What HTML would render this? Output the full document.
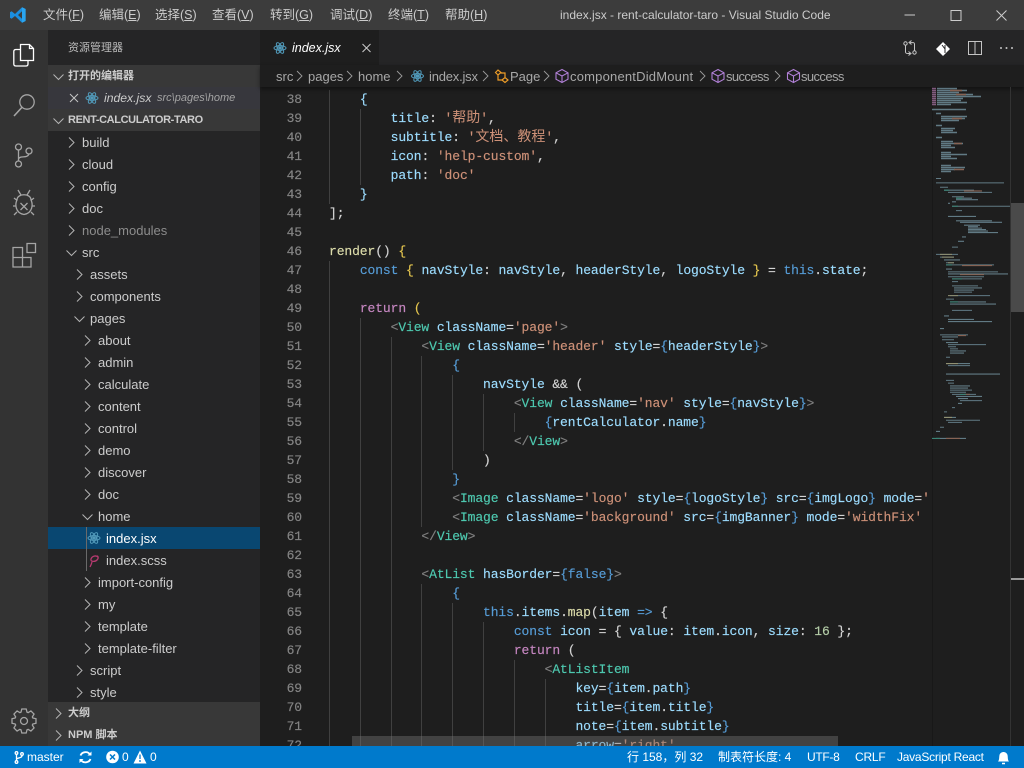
<!DOCTYPE html>
<html><head><meta charset="utf-8"><title>index.jsx - rent-calculator-taro - Visual Studio Code</title>
<style>
*{margin:0;padding:0;box-sizing:border-box}
html,body{width:1024px;height:768px;overflow:hidden;background:#1e1e1e}
body{position:relative;font-family:"Liberation Sans","Noto Sans CJK SC",sans-serif;font-size:13px;color:#ccc}
.a{position:absolute}
.t{position:absolute;white-space:nowrap}
.m{position:absolute;top:7px;font-size:12.5px;line-height:17px;color:#ccc;white-space:nowrap}
.m u{text-decoration:underline}
.r{position:absolute;height:22px;line-height:23px;white-space:nowrap;font-size:13px;color:#ccc}
.c{position:absolute;left:0;top:0;overflow:visible}
.h{position:absolute;font-weight:bold;font-size:11px;line-height:22px;color:#ccc;white-space:nowrap}
pre{font-family:"Liberation Mono","Noto Sans CJK SC",monospace;font-size:13px;letter-spacing:-.1px;line-height:19px;position:absolute;-webkit-text-stroke:.15px}
pre b{font-weight:normal;font-size:14px;letter-spacing:0;font-family:"Noto Sans CJK SC",sans-serif;line-height:1;-webkit-text-stroke:0}
.g{position:absolute;width:1px;background:#404040}
.v{color:#9cdcfe}.s{color:#ce9178}.k{color:#c586c0}.q{color:#569cd6}.f{color:#dcdcaa}.n{color:#4ec9b0}.p{color:#808080}.d{color:#e6c74f}.l{color:#569cd6}.w{color:#d4d4d4}
.bc{position:absolute;top:65px;height:22px;line-height:23px;font-size:13px;color:#a8a8a8;white-space:nowrap}
.st{position:absolute;top:746px;height:22px;line-height:23px;font-size:12px;color:#fff;white-space:nowrap}
</style></head><body>
<!-- title bar -->
<div class="a" style="left:0;top:0;width:1024px;height:30px;background:#3c3c3c"></div>
<svg class="a" style="left:9px;top:6px" width="18" height="18" viewBox="0 0 18 18"><path d="M13 1.2L16.6 3V15L13 16.8L6 10L2.6 12.7L1 11.8V6.2L2.6 5.3L6 8ZM13 5.2L9 9L13 12.8Z" fill="#1b8fe0"/><path d="M13 1.2L16.6 3V15L13 16.8Z" fill="#2aa5f0"/></svg>
<div class="m" style="left:43px">文件(<u>F</u>)</div>
<div class="m" style="left:99px">编辑(<u>E</u>)</div>
<div class="m" style="left:155px">选择(<u>S</u>)</div>
<div class="m" style="left:212px">查看(<u>V</u>)</div>
<div class="m" style="left:270px">转到(<u>G</u>)</div>
<div class="m" style="left:330px">调试(<u>D</u>)</div>
<div class="m" style="left:388px">终端(<u>T</u>)</div>
<div class="m" style="left:445px">帮助(<u>H</u>)</div>
<div class="t" style="left:560px;top:7px;font-size:12px;line-height:17px;color:#ccc">index.jsx - rent-calculator-taro - Visual Studio Code</div>
<svg class="a" style="left:900px;top:0" width="124" height="30" fill="none" stroke="#ccc"><path d="M4.5 15H15" /><path d="M51 10.5H61V20.5H51Z"/><path d="M96.5 10.5L106.500 20.5M106.500 10.5L96.5 20.5"/></svg>
<!-- activity bar -->
<div class="a" style="left:0;top:30px;width:48px;height:716px;background:#333"></div>
<svg class="a" style="left:0;top:30px" width="48" height="716" fill="none" stroke-width="1.3">
<path stroke="#fff" d="M20.5 14.5H29.5L33.5 18.5V30.5H20.5ZM29.5 14.5V18.5H33.5M20.5 19.5H16C14.6 19.5 13.8 20.3 13.8 21.5V34C13.8 35.5 14.6 36 16 36H26C27.3 36 28 35.3 28 34V30.5"/>
<g stroke="#a5a5a5"><circle cx="27" cy="72" r="7.2"/><path d="M21.8 77.5L14 86" stroke-width="1.6"/>
<circle cx="18.500" cy="117" r="3"/><circle cx="18.500" cy="134" r="3"/><circle cx="29" cy="121" r="3"/><path d="M18.500 120V131M18.500 129C20 125 27 129 29 124"/>
<g transform="translate(1 5)"><path d="M16 165C16 158 30 158 30 165C32 169 32 178 23 179.500C14 178 14 169 16 165ZM20 160L17 155M26 160L29 155M19.500 168L26.500 175M26.500 168L19.500 175M15.500 171H12M30.500 171H34M16 177L13 180M30 177L33 180M15.500 165L13 163M30.500 165L33 163"/></g>
<path d="M13 217.500H22.500V227.500H31V237H13ZM13 227.500H22.500V237"/><path d="M27 213.500H35.500V222.500H27Z"/>
<polygon transform="translate(24 691)" points="-3,-8.800 -2.200,-12 2.200,-12 3,-8.800 4.100,-8.340 6.920,-10.040 10.040,-6.920 8.340,-4.100 8.800,-3 12,-2.200 12,2.200 8.800,3 8.340,4.100 10.040,6.920 6.920,10.040 4.100,8.340 3,8.800 2.200,12 -2.200,12 -3,8.800 -4.100,8.340 -6.920,10.040 -10.040,6.920 -8.340,4.100 -8.800,3 -12,2.200 -12,-2.200 -8.800,-3 -8.340,-4.100 -10.040,-6.920 -6.920,-10.040 -4.100,-8.340"/><circle cx="24" cy="691" r="3.500"/></g>
</svg>
<!-- sidebar -->
<div class="a" style="left:48px;top:30px;width:212px;height:716px;background:#252526"></div>
<div class="t" style="left:68px;top:40px;font-size:11px;line-height:16px;color:#bbb">资源管理器</div>
<div class="a" style="left:48px;top:65px;width:212px;height:22px;background:#383838"></div>
<div class="a" style="left:48px;top:87px;width:212px;height:22px;background:#37373d"></div>
<div class="a" style="left:48px;top:109px;width:212px;height:22px;background:#383838"></div>
<div class="a" style="left:48px;top:527px;width:212px;height:22px;background:#094771"></div>
<div class="a" style="left:48px;top:702px;width:212px;height:44px;background:#383838"></div>
<div class="a" style="left:86px;top:527px;width:1px;height:44px;background:#6a6a6a"></div>
<div class="h" style="left:68px;top:65px">打开的编辑器</div>
<div class="h" style="left:68px;top:109px;letter-spacing:-.38px">RENT-CALCULATOR-TARO</div>
<div class="h" style="left:68px;top:702px">大纲</div>
<div class="h" style="left:68px;top:724px">NPM 脚本</div>
<svg class="c" width="260" height="746" fill="none" stroke="#b4b4b4" stroke-width="1">
<defs><g id="cr"><path d="M0 -.5L5 4.500L0 9.500"/></g><g id="cd"><path d="M-.5 1.500L4.500 6.500L9.500 1.500"/></g>
<g id="re" stroke="#519aba" stroke-width="1"><circle cx="8" cy="8" r="1.300" fill="#519aba"/><ellipse cx="8" cy="8" rx="6" ry="2.400"/><ellipse cx="8" cy="8" rx="6" ry="2.400" transform="rotate(60 8 8)"/><ellipse cx="8" cy="8" rx="6" ry="2.400" transform="rotate(120 8 8)"/></g>
<g id="cu" stroke="#b180d7" stroke-width="1.100"><path d="M8 1.500L14 4.800V11.200L8 14.500L2 11.200V4.800ZM2 4.800L8 8L14 4.800M8 8V14.500"/></g></defs>
<use href="#cd" x="54" y="73"/><path d="M70 94L78 102M78 94L70 102" stroke="#c5c5c5"/><use href="#re" x="84" y="90"/>
<use href="#cd" x="54" y="117"/>
<use href="#cr" x="69" y="138"/><use href="#cr" x="69" y="160"/><use href="#cr" x="69" y="182"/><use href="#cr" x="69" y="204"/><use href="#cr" x="69" y="226"/>
<use href="#cd" x="67" y="249"/>
<use href="#cr" x="77" y="270"/><use href="#cr" x="77" y="292"/><use href="#cd" x="75" y="315"/>
<use href="#cr" x="85" y="336"/><use href="#cr" x="85" y="358"/><use href="#cr" x="85" y="380"/><use href="#cr" x="85" y="402"/><use href="#cr" x="85" y="424"/><use href="#cr" x="85" y="446"/><use href="#cr" x="85" y="468"/><use href="#cr" x="85" y="490"/>
<use href="#cd" x="83" y="513"/>
<use href="#re" x="86" y="530"/>
<path d="M98 557C96 555 92 556 91 559C90 562 95 562 97 560C99 558 98 556 97 556M92 562C91.500 564 91 565 90 567" stroke="#b73a70" stroke-width="1.300"/>
<use href="#cr" x="85" y="578"/><use href="#cr" x="85" y="600"/><use href="#cr" x="85" y="622"/><use href="#cr" x="85" y="644"/>
<use href="#cr" x="77" y="666"/><use href="#cr" x="77" y="688"/>
<use href="#cr" x="56" y="709"/><use href="#cr" x="56" y="731"/>
</svg>
<div class="r" style="left:104px;top:87px;font-style:italic;font-size:12.200px">index.jsx</div>
<div class="r" style="left:157px;top:87px;font-style:italic;font-size:11px;color:#a4a4a4">src\pages\home</div>
<div class="r" style="left:82px;top:131px">build</div>
<div class="r" style="left:82px;top:153px">cloud</div>
<div class="r" style="left:82px;top:175px">config</div>
<div class="r" style="left:82px;top:197px">doc</div>
<div class="r" style="left:82px;top:219px;color:#8c8c8c">node_modules</div>
<div class="r" style="left:82px;top:241px">src</div>
<div class="r" style="left:90px;top:263px">assets</div>
<div class="r" style="left:90px;top:285px">components</div>
<div class="r" style="left:90px;top:307px">pages</div>
<div class="r" style="left:98px;top:329px">about</div>
<div class="r" style="left:98px;top:351px">admin</div>
<div class="r" style="left:98px;top:373px">calculate</div>
<div class="r" style="left:98px;top:395px">content</div>
<div class="r" style="left:98px;top:417px">control</div>
<div class="r" style="left:98px;top:439px">demo</div>
<div class="r" style="left:98px;top:461px">discover</div>
<div class="r" style="left:98px;top:483px">doc</div>
<div class="r" style="left:98px;top:505px">home</div>
<div class="r" style="left:106px;top:527px;color:#fff">index.jsx</div>
<div class="r" style="left:106px;top:549px">index.scss</div>
<div class="r" style="left:98px;top:571px">import-config</div>
<div class="r" style="left:98px;top:593px">my</div>
<div class="r" style="left:98px;top:615px">template</div>
<div class="r" style="left:98px;top:637px">template-filter</div>
<div class="r" style="left:90px;top:659px">script</div>
<div class="r" style="left:90px;top:681px">style</div>
<!-- tabs -->
<div class="a" style="left:260px;top:30px;width:764px;height:35px;background:#252526"></div>
<div class="a" style="left:260px;top:30px;width:119px;height:35px;background:#1e1e1e"></div>
<svg class="a" style="left:260px;top:30px" width="764" height="35" fill="none">
<use href="#re" x="12" y="10"/><path d="M102.500 14L110.500 22M110.500 14L102.500 22" stroke="#ccc"/>
<g stroke="#c5c5c5" stroke-width="1"><circle cx="645.500" cy="13.500" r="1.700"/><circle cx="654.500" cy="22.500" r="1.700"/><path d="M645.500 15.500V22C645.500 23.500 646.500 23.500 650 23.500M648.500 21.500L651 23.500L648.500 25.500M654.500 20.500V14C654.500 12.500 653.500 12.500 650 12.500M651.500 10.500L649 12.500L651.500 14.500"/>
<rect x="708.500" y="11.500" width="13" height="13"/><path d="M715 11.500V24.500"/></g>
<path d="M683 12L690 19L683 26L676 19Z" fill="#fff"/><path d="M682 15L685 19V23M685 19V15" stroke="#252526"/>
<g fill="#c5c5c5"><circle cx="741" cy="18" r="1"/><circle cx="746.500" cy="18" r="1"/><circle cx="752" cy="18" r="1"/></g></svg>
<div class="t" style="left:292px;top:38px;line-height:20px;font-style:italic;color:#fff;font-size:12.500px">index.jsx</div>
<!-- breadcrumbs -->
<div class="bc" style="left:276px">src</div>
<div class="bc" style="left:308px">pages</div>
<div class="bc" style="left:358px">home</div>
<div class="bc" style="left:429px;letter-spacing:-.2px">index.jsx</div>
<div class="bc" style="left:510px">Page</div>
<div class="bc" style="left:570px;letter-spacing:.2px">componentDidMount</div>
<div class="bc" style="left:726px;letter-spacing:-.6px">success</div>
<div class="bc" style="left:801px;letter-spacing:-.6px">success</div>
<!-- editor code -->
<div class="a" id="ed" style="left:0;top:87px;width:1024px;height:659px;overflow:hidden">
<div class="g" style="left:329px;top:3px;height:114px"></div><div class="g" style="left:360px;top:22px;height:76px"></div>
<div class="g" style="left:329px;top:174px;height:485px"></div><div class="g" style="left:360px;top:231px;height:428px"></div>
<div class="g" style="left:391px;top:250px;height:409px"></div><div class="g" style="left:421px;top:269px;height:171px"></div>
<div class="g" style="left:421px;top:497px;height:162px"></div><div class="g" style="left:452px;top:288px;height:95px"></div>
<div class="g" style="left:452px;top:516px;height:143px"></div><div class="g" style="left:483px;top:307px;height:57px"></div>
<div class="g" style="left:483px;top:535px;height:124px"></div><div class="g" style="left:514px;top:326px;height:19px"></div>
<div class="g" style="left:514px;top:573px;height:86px"></div><div class="g" style="left:545px;top:592px;height:67px"></div>
<pre style="left:270px;top:3px;width:32px;text-align:right;color:#858585">38
39
40
41
42
43
44
45
46
47
48
49
50
51
52
53
54
55
56
57
58
59
60
61
62
63
64
65
66
67
68
69
70
71
72</pre>
<pre style="left:329px;top:3px;width:600px;overflow:hidden;height:656px;color:#d4d4d4">    <span class="v">{</span>
        <span class="v">title</span>: <span class="s">'<b>帮助</b>'</span>,
        <span class="v">subtitle</span>: <span class="s">'<b>文档、教程</b>'</span>,
        <span class="v">icon</span>: <span class="s">'help-custom'</span>,
        <span class="v">path</span>: <span class="s">'doc'</span>
    <span class="v">}</span>
];

<span class="f">render</span><span class="w">()</span> <span class="d">{</span>
    <span class="q">const</span> <span class="d">{</span> <span class="v">navStyle</span>: <span class="v">navStyle</span>, <span class="v">headerStyle</span>, <span class="v">logoStyle</span> <span class="d">}</span> = <span class="q">this</span>.<span class="v">state</span>;

    <span class="k">return</span> <span class="d">(</span>
        <span class="p">&lt;</span><span class="n">View</span> <span class="v">className</span>=<span class="s">'page'</span><span class="p">&gt;</span>
            <span class="p">&lt;</span><span class="n">View</span> <span class="v">className</span>=<span class="s">'header'</span> <span class="v">style</span>=<span class="l">{</span><span class="v">headerStyle</span><span class="l">}</span><span class="p">&gt;</span>
                <span class="l">{</span>
                    <span class="v">navStyle</span> &amp;&amp; (
                        <span class="p">&lt;</span><span class="n">View</span> <span class="v">className</span>=<span class="s">'nav'</span> <span class="v">style</span>=<span class="l">{</span><span class="v">navStyle</span><span class="l">}</span><span class="p">&gt;</span>
                            <span class="l">{</span><span class="v">rentCalculator</span>.<span class="v">name</span><span class="l">}</span>
                        <span class="p">&lt;/</span><span class="n">View</span><span class="p">&gt;</span>
                    )
                <span class="l">}</span>
                <span class="p">&lt;</span><span class="n">Image</span> <span class="v">className</span>=<span class="s">'logo'</span> <span class="v">style</span>=<span class="l">{</span><span class="v">logoStyle</span><span class="l">}</span> <span class="v">src</span>=<span class="l">{</span><span class="v">imgLogo</span><span class="l">}</span> <span class="v">mode</span>=<span class="s">'aspectFit'</span>
                <span class="p">&lt;</span><span class="n">Image</span> <span class="v">className</span>=<span class="s">'background'</span> <span class="v">src</span>=<span class="l">{</span><span class="v">imgBanner</span><span class="l">}</span> <span class="v">mode</span>=<span class="s">'widthFix'</span> <span class="p">/&gt;</span>
            <span class="p">&lt;/</span><span class="n">View</span><span class="p">&gt;</span>

            <span class="p">&lt;</span><span class="n">AtList</span> <span class="v">hasBorder</span>=<span class="l">{</span><span class="q">false</span><span class="l">}</span><span class="p">&gt;</span>
                <span class="l">{</span>
                    <span class="q">this</span>.<span class="v">items</span>.<span class="f">map</span>(<span class="v">item</span> <span class="q">=&gt;</span> {
                        <span class="q">const</span> <span class="v">icon</span> = { <span class="v">value</span>: <span class="v">item</span>.<span class="v">icon</span>, <span class="v">size</span>: <span style="color:#b5cea8">16</span> };
                        <span class="k">return</span> (
                            <span class="p">&lt;</span><span class="n">AtListItem</span>
                                <span class="v">key</span>=<span class="l">{</span><span class="v">item</span>.<span class="v">path</span><span class="l">}</span>
                                <span class="v">title</span>=<span class="l">{</span><span class="v">item</span>.<span class="v">title</span><span class="l">}</span>
                                <span class="v">note</span>=<span class="l">{</span><span class="v">item</span>.<span class="v">subtitle</span><span class="l">}</span>
                                <span class="v">arrow</span>=<span class="s">'right'</span></pre>
</div>
<!-- breadcrumb bg shadow -->
<div class="a" style="left:260px;top:65px;width:764px;height:22px;background:#1e1e1e;box-shadow:0 2px 4px rgba(0,0,0,.45)"></div>
<div class="bc" style="left:276px">src</div>
<div class="bc" style="left:308px">pages</div>
<div class="bc" style="left:358px">home</div>
<div class="bc" style="left:429px;letter-spacing:-.2px">index.jsx</div>
<div class="bc" style="left:510px">Page</div>
<div class="bc" style="left:570px;letter-spacing:.2px">componentDidMount</div>
<div class="bc" style="left:726px;letter-spacing:-.6px">success</div>
<div class="bc" style="left:801px;letter-spacing:-.6px">success</div>
<svg class="a" style="left:260px;top:65px" width="764" height="22" fill="none">
<path stroke="#9a9a9a" stroke-width=".9" d="M37 6L42 11L37 16M87 6L92 11L87 16M137 6L142 11L137 16M223 6L228 11L223 16M284 6L289 11L284 16M440 6L445 11L440 16M515 6L520 11L515 16"/>
<use href="#re" x="149.500" y="3"/>
<path stroke="#ee9d28" stroke-width="1.200" d="M235.500 7.500L238 5L241 7.500L238 10ZM242 15L245 12.500L248 15L245 17.500ZM241 8H245V12M238 10V15H242"/>
<use href="#cu" x="294" y="3"/><use href="#cu" x="450" y="3"/><use href="#cu" x="525.500" y="3"/>
</svg>
<!-- minimap -->
<svg class="a" style="left:932px;top:87px" width="92" height="659" fill="none" stroke-width="1.500">
<rect x="0" y="0" width="1" height="659" fill="#181818"/>
<rect x="78" y="116" width="14" height="109" fill="#4a4a4a"/>
<rect x="78" y="0" width="1" height="659" fill="#333"/>
<rect x="79" y="491" width="13" height="2" fill="#9a9a9a"/>
<g opacity=".6">
<path stroke="#c586c0" d="M0 1.500h4M0 3.500h4M0 5.500h4M0 7.500h4M0 9.500h4M0 11.500h4M0 13.500h4M0 15.500h4M0 17.500h4"/>
<path stroke="#8fb7c9" d="M5 1.500h20M5 3.500h30M5 5.500h22M5 7.500h36M5 9.500h44M5 11.500h26M5 13.500h24M5 15.500h30M5 17.500h14M0 22.500h34M4 26.500h5M9 29.500h26M9 31.500h24M9 33.500h18M4 38.500h6M9 41.500h14M9 43.500h12M9 45.500h16M4 50.500h6M9 54.500h12M9 56.500h22M9 58.500h10M9 60.500h14M9 65.500h10M9 67.500h26M9 69.500h10M9 71.500h16M9 78.500h10M9 80.500h24M9 82.500h14M9 84.500h10"/>
<path stroke="#ce9178" d="M18 3.500h12M24 7.500h10M20 31.500h10M22 56.500h8M22 82.500h10"/>
<g transform="translate(0 24.700) scale(1 .73)">
<path stroke="#8fb7c9" d="M4 91.500h5M4 97.500h68M8 103.500h8M12 107.500h30M16 110.500h44M20 116.500h12M24 118.500h16M24 120.500h22M20 123.500h4M16 125.500h2M20 129.500h58M24 135.500h6M16 143.500h28M24 149.500h36M28 151.500h42M32 155.500h16M36 157.500h10M36 159.500h14M36 161.500h18M36 163.500h20M36 165.500h30M30 171.500h4M26 177.500h6M20 185.500h6"/>
<path stroke="#ce9178" d="M32 108.500h18"/>
<path stroke="#4ec9b0" d="M12 107.500h5M20 129.500h6M24 118.500h6"/>
</g>
<g transform="translate(0 23.500) scale(1 .7)">
<path stroke="#8fb7c9" d="M4 205.500h22M8 209.500h14M12 213.500h16M14 217.500h8M14 220.500h48M14 226.500h6M16 230.500h50M16 233.500h60M16 237.500h36M20 240.500h30M20 244.500h6M20 250.500h26M22 253.500h28M22 256.500h20M22 259.500h18M18 264.500h40M14 269.500h8M18 273.500h36M18 276.500h46M20 285.500h20M12 293.500h5M16 298.500h26M16 301.500h44M8 311.500h4M8 320.500h28M10 323.500h16M10 327.500h12M14 331.500h12M16 334.500h38M16 337.500h8M18 340.500h8M18 343.500h16M18 346.500h14M14 352.500h4M14 361.500h24M16 364.500h22M14 376.500h54M14 385.500h8M16 389.500h6M18 393.500h20M18 396.500h18M18 399.500h22M18 402.500h16M20 405.500h24M24 408.500h26M26 411.500h10M28 414.500h22M26 418.500h4M20 424.500h3M12 430.500h3M12 438.500h12M14 442.500h34M16 445.500h14M8 452.500h4M4 458.500h4M4 468.500h30"/>
<path stroke="#ce9178" d="M30 221.500h30M28 234.500h24M26 321.500h8M32 405.500h6M14 468.500h14"/>
<path stroke="#4ec9b0" d="M14 220.500h6M18 273.500h8M20 240.500h10M28 405.500h6M0 468.500h8"/>
<path stroke="#dcdcaa" d="M8 205.500h12M10 209.500h12M14 361.500h12M12 438.500h8M16 217.500h6M16 264.500h10"/>
</g>
</g></svg>
<!-- horizontal scrollbar -->
<div class="a" style="left:352px;top:736px;width:486px;height:10px;background:rgba(121,121,121,.4)"></div>
<!-- status bar -->
<div class="a" style="left:0;top:746px;width:1024px;height:22px;background:#007acc"></div>
<svg class="a" style="left:0;top:746px" width="1024" height="22" fill="none">
<g stroke="#fff" stroke-width="1.300"><circle cx="16.500" cy="7" r="1.300"/><circle cx="16.500" cy="16" r="1.300"/><circle cx="22" cy="8" r="1.300"/><path d="M16.500 8.500V14.500M16.500 13C19 11.500 22 12 22 9.500"/>
<path d="M80.500 9.500C82 5.500 88 5 90 8.500M90.500 13C89 17 83 17.500 81 14" stroke-width="1.800"/></g>
<path d="M87.500 9.500H91.500V5.500ZM83.500 13H79.500V17Z" fill="#fff"/>
<circle cx="112.500" cy="11" r="6.300" fill="#fff"/><path d="M110 8.500L115 13.500M115 8.500L110 13.500" stroke="#007acc" stroke-width="1.500"/>
<path d="M140 4.500L146.500 17.500H133.500Z" fill="#fff"/><path d="M140 8.500V13M140 14V16" stroke="#007acc" stroke-width="1.300"/>
<path d="M998 15.500C999.500 14 999 11 999.500 9C1000 7 1002 6 1003.500 6C1005 6 1007 7 1007.500 9C1008 11 1007.500 14 1009 15.500Z" fill="#fff"/><path d="M1002 17.500H1005" stroke="#fff" stroke-width="1.500"/>
</svg>
<div class="st" style="left:27px">master</div>
<div class="st" style="left:122px">0</div>
<div class="st" style="left:150px">0</div>
<div class="st" style="left:627px">行 158，列 32</div>
<div class="st" style="left:718px">制表符长度: 4</div>
<div class="st" style="left:807px;letter-spacing:-.3px">UTF-8</div>
<div class="st" style="left:855px;letter-spacing:-.2px">CRLF</div>
<div class="st" style="left:897px;letter-spacing:-.25px">JavaScript React</div>
</body></html>
